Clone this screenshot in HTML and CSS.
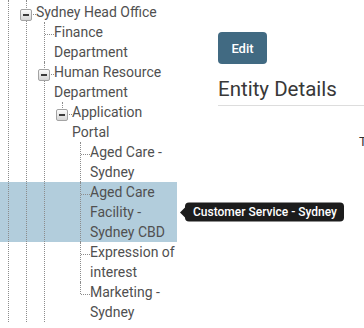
FILE: index.html
```html
<!DOCTYPE html>
<html lang="en">
<head>
  <meta charset="UTF-8" />
  <meta name="viewport" content="width=device-width, initial-scale=1.0"/>
  <title>Entity Details</title>
  <link rel="stylesheet" href="styles.css">
</head>
<body>
  <div class="layout">
    <nav class="tree-pane">
      <ul class="tree">
        <li class="node ancestor open-top">
          <ul>
            <li class="node open-top">
              <div class="row"><span class="toggle"></span><span class="label">Sydney Head Office</span></div>
              <ul>
                <li class="node">
                  <div class="row"><span class="label">Finance Department</span></div>
                </li>
                <li class="node">
                  <div class="row"><span class="toggle"></span><span class="label">Human Resource Department</span></div>
                  <ul>
                    <li class="node last">
                      <div class="row"><span class="toggle"></span><span class="label">Application Portal</span></div>
                      <ul>
                        <li class="node">
                          <div class="row"><span class="label">Aged Care - Sydney</span></div>
                        </li>
                        <li class="node selected">
                          <div class="row"><span class="label">Aged Care Facility - Sydney CBD</span></div>
                          <span class="tooltip">Customer Service - Sydney</span>
                        </li>
                        <li class="node">
                          <div class="row"><span class="label">Expression of interest</span></div>
                        </li>
                        <li class="node last">
                          <div class="row"><span class="label">Marketing - Sydney</span></div>
                        </li>
                      </ul>
                    </li>
                  </ul>
                </li>
              </ul>
            </li>
          </ul>
        </li>
      </ul>
    </nav>

    <main class="detail-pane">
      <button class="btn-edit">Edit</button>
      <h2 class="entity-title">Entity Details</h2>
      <div class="detail-row">Type</div>
    </main>
  </div>
</body>
</html>
```

FILE: styles.css
```css
body {
  margin: 0;
  font-family: Roboto, "Liberation Sans", sans-serif;
  background: #fff;
  overflow: hidden;
}
.layout {
  display: flex;
  height: 328px;
}

/* tree */
.tree-pane {
  flex: none;
  width: 177px;
  padding-top: 2px;
  font-size: 14px;
  line-height: 20px;
  color: #505050;
}
.tree, .tree ul {
  list-style: none;
  margin: 0;
  padding: 0 0 0 8px;
}
.node {
  position: relative;
  padding-left: 10px;
}
.node::before {
  content: "";
  position: absolute;
  left: 0;
  top: 0;
  bottom: 0;
  border-left: 1px dotted #8c8c8c;
}
.node.open-top::before {
  top: -2px;
}
.node.last::before {
  bottom: auto;
  height: 12px;
}
.node::after {
  content: "";
  position: absolute;
  left: 1px;
  top: 12px;
  width: 9px;
  border-top: 1px dotted #8c8c8c;
}
.node.ancestor::after {
  display: none;
}
.row {
  display: flex;
  align-items: flex-start;
  position: relative;
}
.label {
  flex: 1;
  min-width: 0;
}
.toggle {
  flex: none;
  position: relative;
  z-index: 1;
  width: 10px;
  height: 10px;
  margin: 7px 4px 0 -16px;
  border: 1px solid #a3a3a3;
  border-radius: 2px;
  background: linear-gradient(#fbfbfb, #d6d6d6);
}
.toggle::after {
  content: "";
  position: absolute;
  left: 2px;
  top: 4px;
  width: 6px;
  height: 2px;
  background: #3c3c3c;
}
.node.selected > .row::before {
  content: "";
  position: absolute;
  left: -90px;
  right: 0;
  top: 0;
  bottom: 0;
  background: #b2cddc;
  z-index: -1;
}
.tooltip {
  position: absolute;
  left: 105px;
  top: 50%;
  transform: translateY(-50%);
  white-space: nowrap;
  background: #1c1c1c;
  color: #fff;
  font-size: 12px;
  font-weight: 500;
  line-height: 19px;
  padding: 0 7px 0 8px;
  border-radius: 4px;
}
.tooltip::before {
  content: "";
  position: absolute;
  left: -5px;
  top: 50%;
  margin-top: -5px;
  border-top: 5px solid transparent;
  border-bottom: 5px solid transparent;
  border-right: 5px solid #1c1c1c;
}

/* details */
.detail-pane {
  flex: 1;
  min-width: 0;
  overflow: hidden;
  padding: 32px 0 0 41px;
}
.btn-edit {
  display: block;
  width: 49px;
  height: 32px;
  padding: 0;
  border: none;
  border-radius: 4px;
  background: #416a82;
  color: #fff;
  font-family: Roboto, "Liberation Sans", sans-serif;
  font-size: 13px;
  font-weight: 500;
  cursor: pointer;
}
.entity-title {
  margin: 13px 0 0;
  padding-bottom: 3px;
  border-bottom: 1px solid #ddd;
  font-size: 20.5px;
  font-weight: 400;
  line-height: 25px;
  color: #383838;
}
.detail-row {
  margin-top: 26px;
  padding-left: 141px;
  white-space: nowrap;
  font-size: 13px;
  line-height: 20px;
  color: #333;
}
```
